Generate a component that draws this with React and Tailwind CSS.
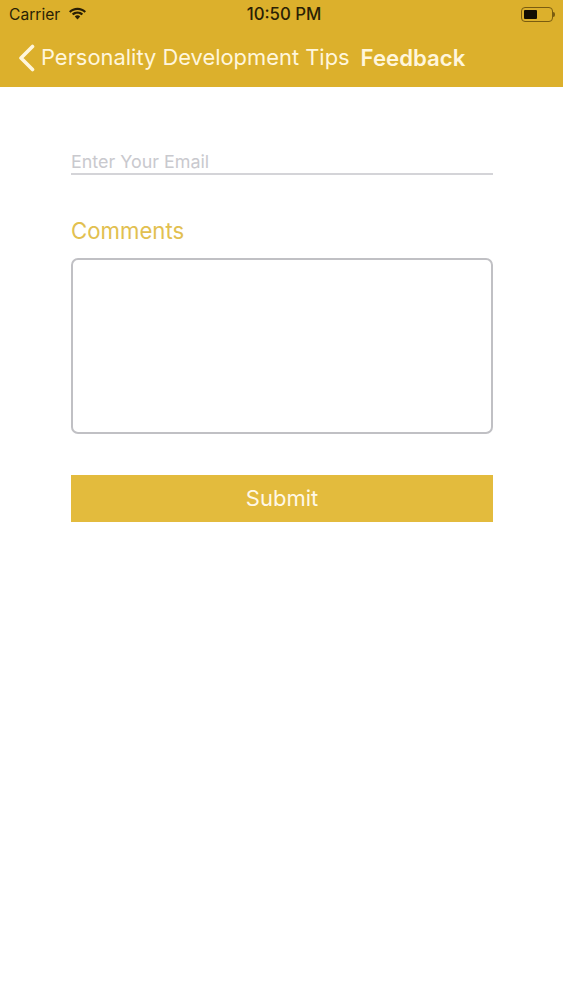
const font = { fontFamily: 'Inter, "Liberation Sans", sans-serif' };

const StatusBar = () => (
    <div className="h-[29px] flex items-center justify-between pl-[9px] pr-[8px] text-[#2a1f05]">
        <div className="flex items-center gap-[8px] w-[154px]">
            <span className="text-[15.6px]">Carrier</span>
            <svg width="19" height="14" viewBox="0 0 19 14" fill="currentColor">
                <path d="M9.5 3C12.2 3 14.6 4 16.5 5.8L18 4.2C15.7 2 12.8.8 9.5.8S3.3 2 1 4.2l1.5 1.6C4.4 4 6.8 3 9.5 3z" />
                <path d="M9.5 6.7c1.6 0 3 .6 4.1 1.6l1.5-1.6C13.6 5.3 11.7 4.5 9.5 4.5S5.4 5.3 3.9 6.7l1.5 1.6c1.1-1 2.5-1.6 4.1-1.6z" />
                <path d="M9.5 8.3c-1.1 0-2 .4-2.7 1.1l2.7 3 2.7-3c-.7-.7-1.6-1.1-2.7-1.1z" />
            </svg>
        </div>
        <span className="text-[16.8px] font-medium">10:50 PM</span>
        <div className="w-[150px] flex justify-end items-center">
            <div className="w-[32px] h-[15px] rounded-[4px] border border-[#7a5c10] p-[2px] flex">
                <div className="w-[13px] bg-[#120d02] rounded-[1px]" />
            </div>
            <div className="w-[2px] h-[5px] bg-[#7a5c10] rounded-r-sm" />
        </div>
    </div>
);

const NavBar = () => (
    <div className="h-[58px] flex items-center pl-[18px] text-[#fff6dc]">
        <svg width="17" height="28" viewBox="0 0 17 28" fill="none" stroke="currentColor" strokeWidth="3.6" strokeLinecap="round" strokeLinejoin="round">
            <path d="M14.5 2.5 3 14l11.5 11.5" />
        </svg>
        <span className="ml-[6px] text-[21.9px] leading-none">Personality Development Tips</span>
        <span className="ml-[11px] text-[22.2px] leading-none font-semibold">Feedback</span>
    </div>
);

export default function App() {
    return (
        <div className="min-h-[1000px] bg-white" style={font}>
            <div className="h-[87px] bg-[#dcb02c]">
                <StatusBar />
                <NavBar />
            </div>

            <div className="pl-[71px] pr-[70px]">
                <div className="mt-[63px] h-[25px] border-b-2 border-[#d4d4d8] text-[17.9px] leading-[23px] text-[#c9c9ce]">
                    Enter Your Email
                </div>

                <div className="mt-[42px] text-[22.2px] leading-[27px] text-[#e2c050]">Comments</div>

                <div className="mt-[14px] h-[176px] rounded-[7px] border-2 border-[#c0c0c4]" />

                <button className="mt-[41px] w-full h-[47px] bg-[#e3bb3d] text-[#fff8e6] text-[22px]">
                    Submit
                </button>
            </div>
        </div>
    );
}
